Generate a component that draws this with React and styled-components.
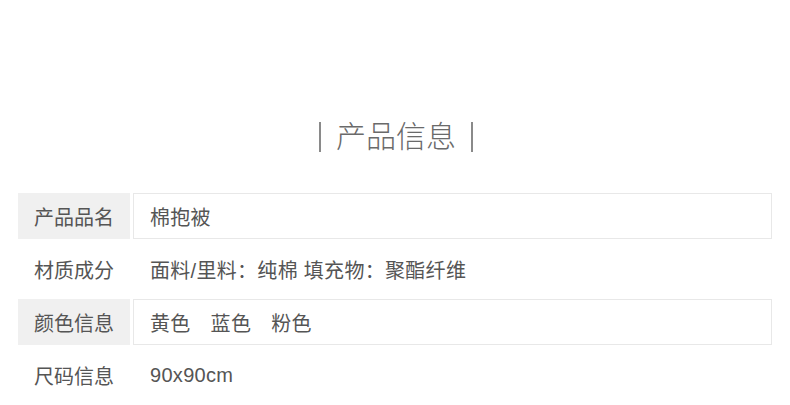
import React from "react";
import styled, { createGlobalStyle } from "styled-components";

const Global = createGlobalStyle`
  body {
    margin: 0;
    background: #fff;
    font-family: "Liberation Sans", "Noto Sans CJK SC", sans-serif;
  }
`;

const Page = styled.div`
  width: 790px;
  height: 405px;
  padding: 117px 18px 0;
  box-sizing: border-box;
  display: flex;
  flex-direction: column;
  overflow: hidden;
`;

const Heading = styled.div`
  display: flex;
  align-items: center;
  justify-content: center;
  gap: 15px;
  height: 40px;
  margin-bottom: 36px;
  padding-left: 2px;
`;

const Bar = styled.span`
  width: 2px;
  height: 30px;
  background: #8a8a8a;
`;

const HeadingText = styled.span`
  font-size: 30px;
  line-height: 40px;
  color: #6a6a6a;
  font-weight: 300;
`;

const Table = styled.div`
  display: flex;
  flex-direction: column;
  gap: 7px;
  width: 754px;
`;

const Row = styled.div`
  display: flex;
  gap: 3px;
  height: 46px;
`;

const Label = styled.div`
  width: 112px;
  flex-shrink: 0;
  display: flex;
  align-items: center;
  justify-content: center;
  background: ${({ $shaded }) => ($shaded ? "#f0f0f0" : "transparent")};
  font-size: 20px;
  color: #555;
`;

const Value = styled.div`
  flex: 1;
  display: flex;
  align-items: center;
  gap: 20px;
  padding-left: 16px;
  box-sizing: border-box;
  border: 1px solid ${({ $shaded }) => ($shaded ? "#e8e8e8" : "transparent")};
  font-size: 20px;
  letter-spacing: 0.3px;
  color: #555;
`;

const rows = [
  { label: "产品品名", values: ["棉抱被"] },
  { label: "材质成分", values: ["面料/里料：纯棉 填充物：聚酯纤维"] },
  { label: "颜色信息", values: ["黄色", "蓝色", "粉色"] },
  { label: "尺码信息", values: ["90x90cm"] },
];

export default function App() {
  return (
    <Page>
      <Global />
      <Heading>
        <Bar />
        <HeadingText>产品信息</HeadingText>
        <Bar />
      </Heading>
      <Table>
        {rows.map((r, i) => (
          <Row key={r.label}>
            <Label $shaded={i % 2 === 0}>{r.label}</Label>
            <Value $shaded={i % 2 === 0}>
              {r.values.map((v) => (
                <span key={v}>{v}</span>
              ))}
            </Value>
          </Row>
        ))}
      </Table>
    </Page>
  );
}
